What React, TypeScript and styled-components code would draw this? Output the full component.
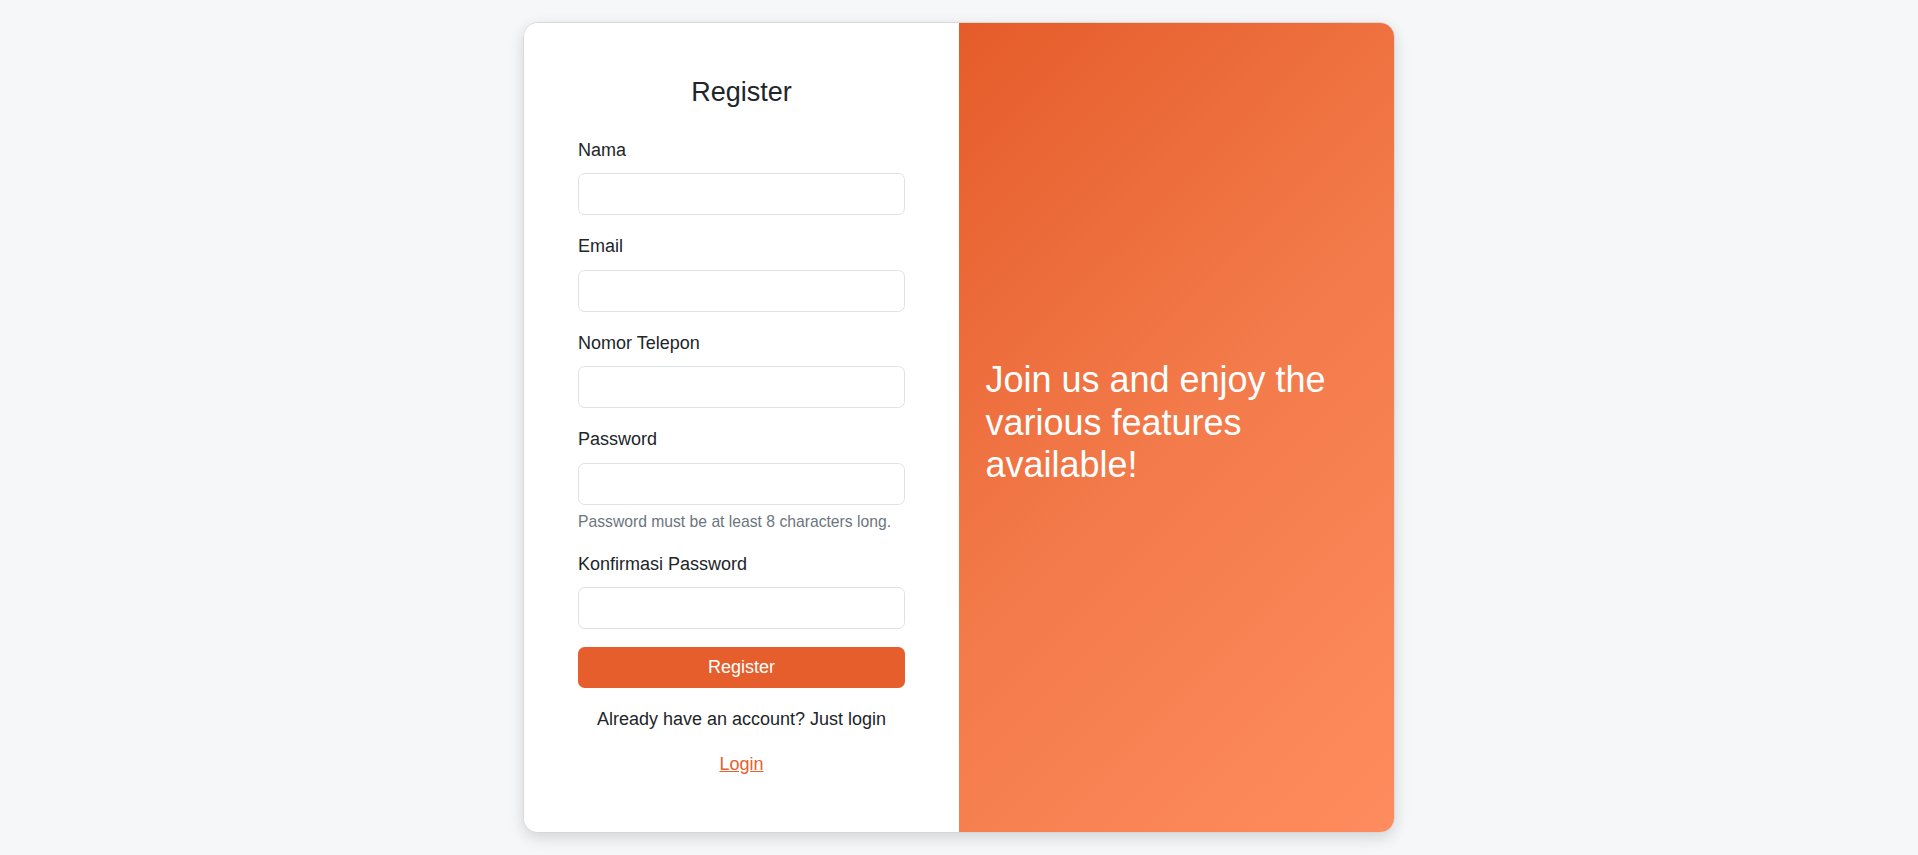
import React from "react";
import styled, { createGlobalStyle } from "styled-components";

const GlobalStyle = createGlobalStyle`
  *, *::before, *::after { box-sizing: border-box; }
  html, body { margin: 0; padding: 0; }
  body {
    background: #f6f7f9;
    font-family: "Liberation Sans", Arial, Helvetica, sans-serif;
    color: #212529;
  }
`;

const Page = styled.div`
  min-height: 100vh;
  display: flex;
  align-items: center;
  justify-content: center;
`;

const Card = styled.div`
  width: 872px;
  display: flex;
  background: #ffffff;
  border: 1px solid #d8d8d8;
  border-radius: 15px;
  overflow: hidden;
  box-shadow: 0 5px 15px rgba(0, 0, 0, 0.14);
`;

const FormPanel = styled.div`
  flex: 1 1 50%;
  padding: 53.5px 54px 54px;
  background: #ffffff;
`;

const Title = styled.h2`
  margin: 0 0 28.3px;
  font-size: 27px;
  line-height: 31.7px;
  font-weight: 400;
  text-align: center;
  color: #212529;
`;

const Field = styled.div`
  display: flex;
  flex-direction: column;
  margin-bottom: 18px;
`;

const Label = styled.label`
  display: block;
  font-size: 18px;
  line-height: 26.4px;
  margin-bottom: 10px;
  color: #212529;
`;

const Input = styled.input`
  display: block;
  width: 100%;
  height: 42px;
  padding: 6.6px 13.2px;
  font-size: 18px;
  font-family: inherit;
  color: #212529;
  background: #ffffff;
  border: 1px solid #dee2e6;
  border-radius: 6.6px;
  outline: none;
`;

const Hint = styled.small`
  display: block;
  margin-top: 5px;
  font-size: 15.7px;
  line-height: 23.1px;
  color: #6c757d;
`;

const SubmitButton = styled.button`
  display: block;
  width: 100%;
  height: 41px;
  border: none;
  border-radius: 6.6px;
  background: #e55e2b;
  color: #ffffff;
  font-family: inherit;
  font-size: 18px;
  line-height: 26.4px;
  cursor: pointer;
`;

const Note = styled.p<{ $top: number }>`
  margin: ${(p) => p.$top}px 0 0;
  font-size: 18px;
  line-height: 26.4px;
  text-align: center;
  color: #212529;
`;

const LoginLink = styled.a`
  color: #e8602c;
  text-decoration: underline;
`;

const PromoPanel = styled.div`
  flex: 1 1 50%;
  display: flex;
  align-items: center;
  padding: 0 26.4px;
  background: linear-gradient(135deg, #e55c2a 0%, #f37a4a 50%, #ff8c5e 100%);
`;

const PromoText = styled.h2`
  margin: 0 0 8.8px;
  font-size: 36px;
  line-height: 42.4px;
  font-weight: 400;
  color: #ffffff;
`;

const fields: { label: string; type: string; hint?: string }[] = [
  { label: "Nama", type: "text" },
  { label: "Email", type: "email" },
  { label: "Nomor Telepon", type: "tel" },
  {
    label: "Password",
    type: "password",
    hint: "Password must be at least 8 characters long.",
  },
  { label: "Konfirmasi Password", type: "password" },
];

export default function App() {
  return (
    <>
      <GlobalStyle />
      <Page>
        <Card>
          <FormPanel>
            <Title>Register</Title>
            <form onSubmit={(e) => e.preventDefault()}>
              {fields.map((f) => (
                <Field key={f.label}>
                  <Label>{f.label}</Label>
                  <Input type={f.type} />
                  {f.hint && <Hint>{f.hint}</Hint>}
                </Field>
              ))}
              <SubmitButton type="submit">Register</SubmitButton>
            </form>
            <Note $top={18}>Already have an account? Just login</Note>
            <Note $top={18.6}>
              <LoginLink href="#">Login</LoginLink>
            </Note>
          </FormPanel>
          <PromoPanel>
            <PromoText>Join us and enjoy the various features available!</PromoText>
          </PromoPanel>
        </Card>
      </Page>
    </>
  );
}
